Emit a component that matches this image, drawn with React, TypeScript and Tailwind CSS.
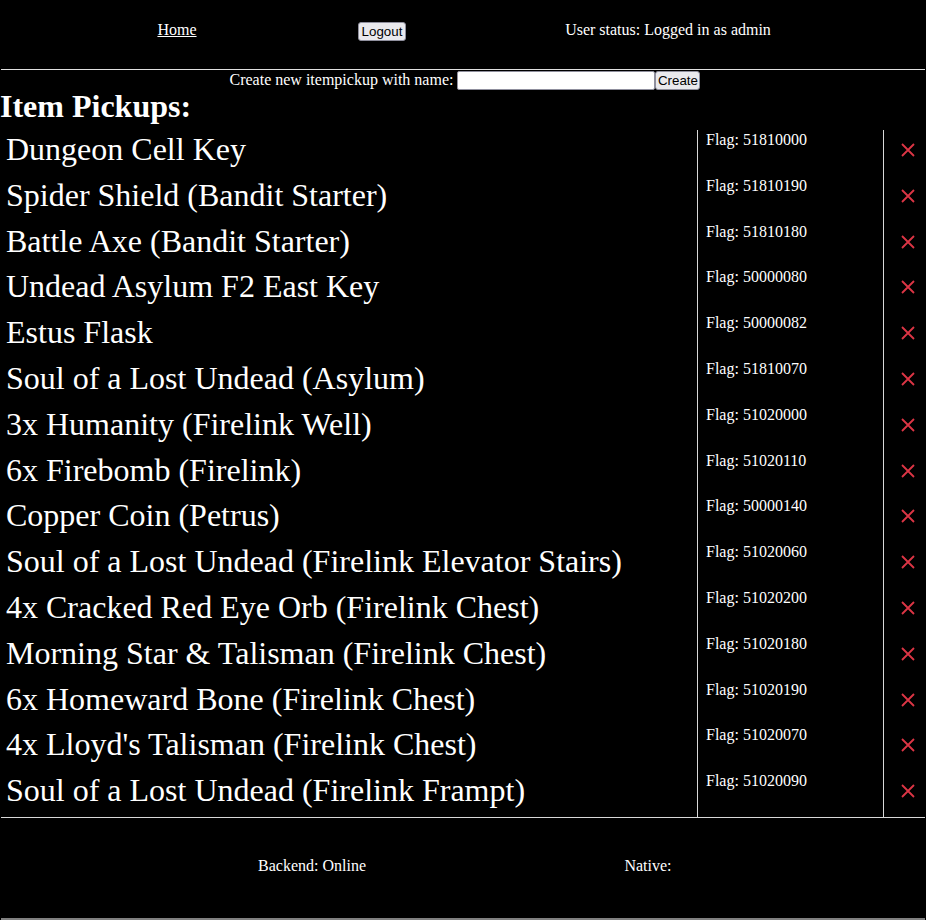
import React from "react";

const items: [string, string][] = [
  ["Dungeon Cell Key", "51810000"],
  ["Spider Shield (Bandit Starter)", "51810190"],
  ["Battle Axe (Bandit Starter)", "51810180"],
  ["Undead Asylum F2 East Key", "50000080"],
  ["Estus Flask", "50000082"],
  ["Soul of a Lost Undead (Asylum)", "51810070"],
  ["3x Humanity (Firelink Well)", "51020000"],
  ["6x Firebomb (Firelink)", "51020110"],
  ["Copper Coin (Petrus)", "50000140"],
  ["Soul of a Lost Undead (Firelink Elevator Stairs)", "51020060"],
  ["4x Cracked Red Eye Orb (Firelink Chest)", "51020200"],
  ["Morning Star & Talisman (Firelink Chest)", "51020180"],
  ["6x Homeward Bone (Firelink Chest)", "51020190"],
  ["4x Lloyd's Talisman (Firelink Chest)", "51020070"],
  ["Soul of a Lost Undead (Firelink Frampt)", "51020090"],
];

const btn =
  "h-[19px] rounded-[3px] border border-[#8f8f9d] bg-[#e9e9ed] text-black text-[13.33px] leading-[15px] [font-family:'Liberation_Sans',Arial,sans-serif]";

export default function App() {
  return (
    <div className="min-h-[920px] w-[926px] bg-black text-white [font-family:'Liberation_Serif','Times_New_Roman',serif] text-[16px]">
      <div className="h-[69px] grid grid-cols-[354px_56px_516px] items-start pt-[20px]">
        <div className="text-center leading-[19px]">
          <a href="#" className="underline text-white">Home</a>
        </div>
        <div className="flex justify-center mt-[2px]">
          <button className={btn + " px-[2.5px]"}>Logout</button>
        </div>
        <div className="text-center leading-[19px]">User status: Logged in as admin</div>
      </div>
      <div className="mx-[1px] border-t border-[#e0e0e0]" />
      <div className="h-[20px] flex items-center justify-center pl-[4px]">
        <span className="leading-[18px] mr-[4px]">Create new itempickup with name:</span>
        <input className="w-[198px] h-[19px] bg-white border border-[#8f8f9d] rounded-[2px] text-black" />
        <button className={btn + " px-[1.5px]"}>Create</button>
      </div>
      <h1 className="text-[32px] font-bold leading-[33px] h-[40px] m-0">Item Pickups:</h1>
      <div className="mx-[1px] border-b border-[#d8d8d8]">
        {items.map(([name, flag]) => (
          <div key={flag + name} className="grid grid-cols-[696px_186px_42px] h-[45.8px]">
            <div className="text-[32px] leading-[36px] pt-[1px] pl-[5px] whitespace-nowrap">{name}</div>
            <div className="border-l border-[#d8d8d8] pl-[8px] pt-[1px] leading-[18px]">Flag: {flag}</div>
            <div className="border-l border-[#d8d8d8] pl-[17px] pt-[13px]">
              <svg width="14" height="14" viewBox="0 0 14 14">
                <path d="M1 1 L13 13 M13 1 L1 13" stroke="#dc3545" strokeWidth="1.8" fill="none" />
              </svg>
            </div>
          </div>
        ))}
      </div>
      <div className="h-[100px] grid grid-cols-[624px_48px] items-center pb-[4px]">
        <div className="text-center leading-[18px]">Backend: Online</div>
        <div className="text-center leading-[18px]">Native:</div>
      </div>
      <div className="mx-[1px] border-t-2 border-[#808080]" />
    </div>
  );
}
